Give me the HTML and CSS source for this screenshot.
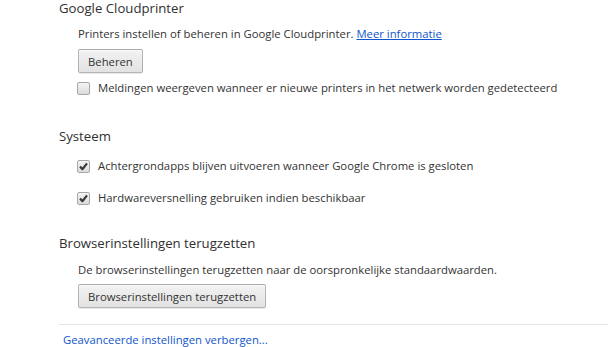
FILE: index.html
```html
<!DOCTYPE html>
<html lang="nl">
<head>
<meta charset="utf-8">
<title>Instellingen</title>
<link rel="stylesheet" href="styles.css">
</head>
<body>
<div class="page">
  <section class="section s1">
    <h3 class="title">Google Cloudprinter</h3>
    <div class="body">
      <div class="row text-row">Printers instellen of beheren in Google Cloudprinter. <a class="link" href="#">Meer informatie</a></div>
      <div class="btn-row"><button class="btn">Beheren</button></div>
      <label class="row check-row">
        <span class="cb"></span>
        <span>Meldingen weergeven wanneer er nieuwe printers in het netwerk worden gedetecteerd</span>
      </label>
    </div>
  </section>
  <section class="section s2">
    <h3 class="title">Systeem</h3>
    <div class="body">
      <label class="row check-row first">
        <span class="cb checked"><svg viewBox="0 0 13 13" width="13" height="13"><path d="M3 6.6 L5.4 9.2 L10 3.4" fill="none" stroke="#3a3a3a" stroke-width="2.2" stroke-linejoin="round"/></svg></span>
        <span>Achtergrondapps blijven uitvoeren wanneer Google Chrome is gesloten</span>
      </label>
      <label class="row check-row second">
        <span class="cb checked"><svg viewBox="0 0 13 13" width="13" height="13"><path d="M3 6.6 L5.4 9.2 L10 3.4" fill="none" stroke="#3a3a3a" stroke-width="2.2" stroke-linejoin="round"/></svg></span>
        <span>Hardwareversnelling gebruiken indien beschikbaar</span>
      </label>
    </div>
  </section>
  <section class="section s3">
    <h3 class="title">Browserinstellingen terugzetten</h3>
    <div class="body">
      <div class="row text-row">De browserinstellingen terugzetten naar de oorspronkelijke standaardwaarden.</div>
      <div class="btn-row"><button class="btn">Browserinstellingen terugzetten</button></div>
    </div>
  </section>
  <div class="footer">
    <a class="link plain" href="#">Geavanceerde instellingen verbergen...</a>
  </div>
</div>
</body>
</html>
```
FILE: styles.css
```css
html, body {
  margin: 0;
  padding: 0;
  background: #ffffff;
}
body {
  font-family: "Open Sans", "Noto Sans", sans-serif;
  font-size: 11.3px;
  color: #333333;
}
.page {
  padding-left: 59px;
}
.title {
  margin: 0;
  font-size: 13.2px;
  font-weight: normal;
  line-height: 16px;
  color: #303030;
}
.body {
  padding-left: 19px;
  display: flex;
  flex-direction: column;
  align-items: flex-start;
}
.row {
  line-height: 16px;
  white-space: nowrap;
}
.s1 .text-row { margin-top: 10px; }
.s1 .btn-row { margin-top: 7px; }
.s1 .check-row { margin-top: 7px; }
.s2 { margin-top: 32px; }
.s2 .first { margin-top: 14px; }
.s2 .second { margin-top: 16px; }
.s3 { margin-top: 29px; }
.s3 .text-row { margin-top: 11px; }
.s3 .btn-row { margin-top: 6px; }
.link {
  color: #1155cc;
  text-decoration: underline;
}
.link.plain {
  text-decoration: none;
}
.btn {
  font-family: inherit;
  font-size: 11.3px;
  color: #333;
  height: 24px;
  padding: 0 9px;
  border: 1px solid rgba(0,0,0,0.25);
  border-radius: 2px;
  background: linear-gradient(#f2f2f2, #e2e2e2);
  box-shadow: 0 1px 0 rgba(0,0,0,0.08), inset 0 1px 2px rgba(255,255,255,0.75);
  display: block;
}
.check-row {
  display: flex;
  align-items: center;
  gap: 8px;
  margin-left: -1px;
}
.cb {
  width: 11px;
  height: 11px;
  border: 1px solid #a6a6a6;
  border-radius: 2px;
  background: linear-gradient(#f4f4f4, #dcdcdc);
  position: relative;
  flex: none;
}
.cb svg {
  position: absolute;
  left: -1px;
  top: -1px;
}
.footer {
  margin-top: 16px;
  border-top: 1px solid #e6e6e6;
  padding-top: 7px;
  padding-left: 4px;
  line-height: 16px;
}
```
